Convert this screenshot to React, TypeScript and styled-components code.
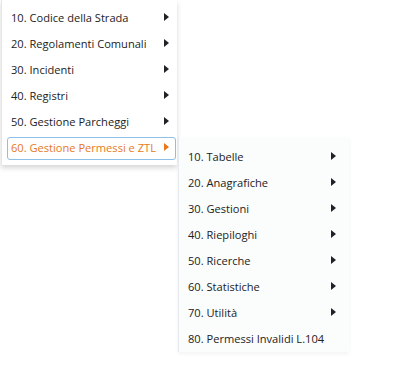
import React from "react";
import styled, { createGlobalStyle } from "styled-components";

const Global = createGlobalStyle`
  html, body { margin: 0; padding: 0; background: #ffffff; }
  body { font-family: "Open Sans", "Liberation Sans", sans-serif; }
`;

const Page = styled.div`
  width: 418px;
  height: 368px;
  position: relative;
  padding-left: 1px;
  box-sizing: border-box;
`;

const Menu = styled.ul<{ $width: number }>`
  list-style: none;
  margin: 0;
  padding: 5px 0 4px 0;
  width: ${(p) => p.$width}px;
  background: #ffffff;
  border-left: 1px solid #e3e6ea;
  box-shadow: 0 3px 5px rgba(0, 0, 0, 0.16);
  box-sizing: border-box;
`;

const SubMenu = styled(Menu)`
  position: absolute;
  left: 171px;
  top: 2px;
  padding: 7px 0 0 0;
  background: #fbfcfc;
  border-left: 1px solid #e6eaee;
  box-shadow: 0 2px 4px rgba(0, 0, 0, 0.05);
  height: 215px;
`;

const Item = styled.li<{ $active?: boolean; $sub?: boolean }>`
  position: relative;
  display: flex;
  align-items: center;
  justify-content: space-between;
  height: 26px;
  box-sizing: border-box;
  padding: 0 ${(p) => (p.$sub ? "13px" : "8px")} 0 9px;
  margin: 0;
  font-size: 11.1px;
  color: #222222;
  white-space: nowrap;
  ${(p) =>
    p.$active
      ? `
    margin: 0 1px 0 5px;
    padding-left: 4px;
    padding-right: 7px;
    color: #e5791b;
  `
      : ""}
`;

const ActiveBox = styled.div`
  position: absolute;
  left: 0;
  right: 0;
  top: 2px;
  bottom: 1px;
  border: 1px solid #8dbfe9;
  border-radius: 3px;
  pointer-events: none;
`;

const Label = styled.span`
  line-height: 26px;
`;

const Arrow = styled.span<{ $color: string }>`
  width: 0;
  height: 0;
  border-top: 4px solid transparent;
  border-bottom: 4px solid transparent;
  border-left: 5px solid ${(p) => p.$color};
  margin-top: -2px;
`;

const main = [
  "10. Codice della Strada",
  "20. Regolamenti Comunali",
  "30. Incidenti",
  "40. Registri",
  "50. Gestione Parcheggi",
];

const sub = [
  { t: "10. Tabelle", a: true },
  { t: "20. Anagrafiche", a: true },
  { t: "30. Gestioni", a: true },
  { t: "40. Riepiloghi", a: true },
  { t: "50. Ricerche", a: true },
  { t: "60. Statistiche", a: true },
  { t: "70. Utilità", a: true },
  { t: "80. Permessi Invalidi L.104", a: false },
];

export default function App() {
  return (
    <Page>
      <Global />
      <Menu $width={176}>
        {main.map((m) => (
          <Item key={m}>
            <Label>{m}</Label>
            <Arrow $color="#1f2328" />
          </Item>
        ))}
        <Item $active>
          <ActiveBox />
          <Label>60. Gestione Permessi e ZTL</Label>
          <Arrow $color="#e5791b" />
          <SubMenu $width={171} as="ul">
            {sub.map((s) => (
              <Item key={s.t} $sub>
                <Label>{s.t}</Label>
                {s.a && <Arrow $color="#1f2328" />}
              </Item>
            ))}
          </SubMenu>
        </Item>
      </Menu>
    </Page>
  );
}
